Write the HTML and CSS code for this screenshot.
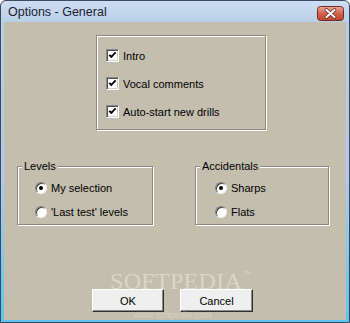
FILE: index.html
```html
<!DOCTYPE html>
<html>
<head>
<meta charset="utf-8">
<link rel="stylesheet" href="styles.css">
</head>
<body>
<div class="window">
  <div class="titlebar">
    <span class="title">Options - General</span>
    <button class="close" aria-label="Close">
      <svg width="27" height="15" viewBox="0 0 27 15">
        <defs>
          <linearGradient id="cg" x1="0" y1="0" x2="0" y2="1">
            <stop offset="0" stop-color="#eaa898"/>
            <stop offset="0.5" stop-color="#d2644e"/>
            <stop offset="1" stop-color="#c0452c"/>
          </linearGradient>
        </defs>
        <rect x="0.5" y="0.5" width="26" height="14" rx="3" fill="url(#cg)" stroke="#6f2a1e"/>
        <path d="M9.5 4 L17.5 11 M17.5 4 L9.5 11" stroke="#5a2018" stroke-width="3.6" stroke-linecap="round"/>
        <path d="M9.5 4 L17.5 11 M17.5 4 L9.5 11" stroke="#ffffff" stroke-width="2.2" stroke-linecap="round"/>
      </svg>
    </button>
  </div>
  <div class="client">
    <div class="group checks">
      <label class="row"><span class="checkbox"><svg width="11" height="11" viewBox="0 0 11 11"><path d="M2.3 4.8 L4.3 6.9 L8.6 2.4" fill="none" stroke="#000" stroke-width="1.9"/></svg></span>Intro</label>
      <label class="row"><span class="checkbox"><svg width="11" height="11" viewBox="0 0 11 11"><path d="M2.3 4.8 L4.3 6.9 L8.6 2.4" fill="none" stroke="#000" stroke-width="1.9"/></svg></span>Vocal comments</label>
      <label class="row"><span class="checkbox"><svg width="11" height="11" viewBox="0 0 11 11"><path d="M2.3 4.8 L4.3 6.9 L8.6 2.4" fill="none" stroke="#000" stroke-width="1.9"/></svg></span>Auto-start new drills</label>
    </div>
    <div class="pair">
      <div class="group levels">
        <span class="legend">Levels</span>
        <div class="radios">
          <label class="row"><span class="radio on"></span>My selection</label>
          <label class="row"><span class="radio"></span>'Last test' levels</label>
        </div>
      </div>
      <div class="group accidentals">
        <span class="legend">Accidentals</span>
        <div class="radios">
          <label class="row"><span class="radio on"></span>Sharps</label>
          <label class="row"><span class="radio"></span>Flats</label>
        </div>
      </div>
    </div>
    <div class="buttons">
      <button class="btn">OK</button>
      <button class="btn">Cancel</button>
    </div>
    <div class="watermark">SOFTPEDIA<sup>™</sup></div>
    <div class="watermark-url">www.softpedia.com</div>
  </div>
</div>
</body>
</html>
```

FILE: styles.css
```css
* { box-sizing: border-box; }
html, body { margin: 0; padding: 0; }
body {
  width: 350px;
  height: 323px;
  overflow: hidden;
  background: #ffffff;
  font-family: "Liberation Sans", Arial, sans-serif;
  font-size: 11px;
  color: #000;
}
.window {
  width: 350px;
  height: 323px;
  border: 1px solid #3a4a5c;
  border-radius: 6px 6px 0 0;
  background: linear-gradient(#cddef2 0, #b8cee8 22px, #aecbea 180px, #5cc4ee 100%);
  padding: 0 3px 2px 3px;
  display: flex;
  flex-direction: column;
}
.titlebar {
  height: 21px;
  display: flex;
  align-items: center;
  justify-content: space-between;
  padding: 0 1px 0 4px;
}
.title {
  font-family: "Liberation Sans", Arial, sans-serif;
  font-size: 12.5px;
  color: #1a2233;
  padding-top: 1px;
}
.close {
  border: 0;
  padding: 0;
  margin: 3px 1px 0 0;
  background: none;
  width: 27px;
  height: 15px;
  display: block;
}
.close svg { display: block; }
.client {
  flex: 1;
  background: #c4beae;
  position: relative;
  padding-top: 13px;
}
.group {
  border: 1px solid #8e897c;
  box-shadow: inset 1px 1px 0 #ffffff, 1px 1px 0 #ffffff;
}
.checks {
  margin-left: 92px;
  width: 170px;
  height: 95px;
  padding: 13px 0 0 9px;
  display: flex;
  flex-direction: column;
  gap: 15px;
}
.row {
  display: flex;
  align-items: center;
  height: 13px;
  white-space: nowrap;
}
.checkbox {
  width: 13px;
  height: 13px;
  flex: none;
  margin-right: 4px;
  background: #fff;
  border: 1px solid;
  border-color: #8a8a8a #ffffff #ffffff #8a8a8a;
  box-shadow: inset 1px 1px 0 #505050, inset -1px -1px 0 #d4d0c8;
  display: flex;
  align-items: center;
  justify-content: center;
}
.checkbox svg { display: block; }
.pair {
  display: flex;
  margin-top: 36px;
  padding-left: 13px;
  gap: 42px;
}
.levels { width: 136px; height: 59px; }
.accidentals { width: 134px; height: 59px; }
.legend {
  display: block;
  width: fit-content;
  margin: -7px 0 0 4px;
  padding: 0 2px;
  height: 13px;
  line-height: 13px;
  background: #c4beae;
}
.radios {
  display: flex;
  flex-direction: column;
  gap: 11px;
  padding-top: 8px;
}
.levels .radios { padding-left: 17px; }
.accidentals .radios { padding-left: 19px; }
.radio {
  width: 12px;
  height: 12px;
  flex: none;
  margin-right: 4px;
  border-radius: 50%;
  background: #fff;
  border: 1px solid;
  border-color: #808080 #f4f4f4 #f4f4f4 #808080;
  box-shadow: inset 1px 1px 0 #404040;
  display: flex;
  align-items: center;
  justify-content: center;
}
.radio.on::after {
  content: "";
  width: 4px;
  height: 4px;
  border-radius: 50%;
  background: #000;
}
.buttons {
  display: flex;
  gap: 16px;
  margin-top: 64px;
  padding-left: 88px;
}
.btn {
  width: 72px;
  height: 23px;
  padding: 0;
  font-family: "Liberation Sans", Arial, sans-serif;
  font-size: 11px;
  line-height: 12px;
  color: #000;
  background: #efefef;
  border: 1px solid;
  border-color: #ffffff #303030 #303030 #ffffff;
  box-shadow: inset -1px -1px 0 #8a8a8a;
  border-radius: 0;
}
.btn:last-child { width: 73px; }
.watermark {
  position: absolute;
  left: 106px;
  top: 250px;
  pointer-events: none;
  color: rgba(255, 255, 255, 0.38);
  font-family: "Liberation Serif", "Times New Roman", serif;
  font-size: 24px;
  letter-spacing: 0.3px;
  line-height: 18px;
  white-space: nowrap;
}
.watermark sup {
  font-family: "Liberation Sans", Arial, sans-serif;
  font-size: 7px;
  line-height: 0;
  vertical-align: 13px;
  margin-left: 2px;
}
.watermark-url {
  position: absolute;
  left: 130px;
  top: 289px;
  pointer-events: none;
  font-family: "Liberation Sans", Arial, sans-serif;
  font-size: 9px;
  line-height: 8px;
  color: rgba(255, 255, 255, 0.3);
  white-space: nowrap;
}
```
